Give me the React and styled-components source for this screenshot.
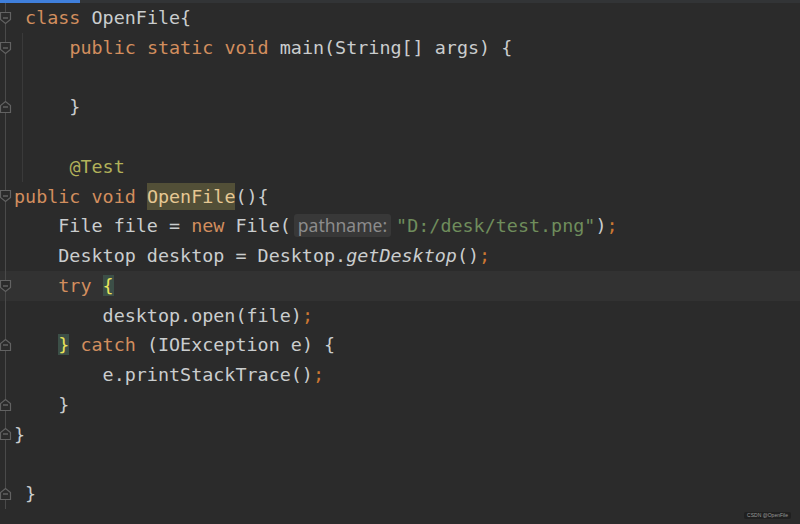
import React from "react";
import styled, { createGlobalStyle } from "styled-components";

const GlobalStyle = createGlobalStyle`
  html, body {
    margin: 0;
    padding: 0;
    background: #2b2b2b;
  }
`;

const Editor = styled.div`
  position: relative;
  width: 800px;
  height: 524px;
  overflow: hidden;
  background: #2b2b2b;
  font-family: "DejaVu Sans Mono", "Liberation Mono", monospace;
  font-size: 18.4px;
  color: #cacdce;
`;

const TopStrip = styled.div`
  height: 3px;
  background: #323436;
  display: flex;
`;

const ActiveTab = styled.div`
  width: 80px;
  background: #3f7fdc;
`;

const Lines = styled.div`
  display: flex;
  flex-direction: column;
`;

const Row = styled.div`
  display: flex;
  height: 29.75px;
  background: ${(p) => (p.$current ? "#323232" : "transparent")};
`;

const Gutter = styled.div`
  width: 14px;
  height: 100%;
  flex-shrink: 0;
  display: flex;
  align-items: center;
  background: linear-gradient(
    to right,
    transparent 5px,
    #4a4a4a 5px,
    #4a4a4a 6px,
    transparent 6px
  );
`;

const Code = styled.div`
  position: relative;
  flex: 1;
  line-height: 29.75px;
  white-space: pre;

  &::before {
    content: "";
    display: ${(p) => (p.$guide ? "block" : "none")};
    position: absolute;
    left: 8px;
    top: 0;
    bottom: 0;
    width: 1px;
    background: #3a3a3a;
  }
`;

const Kw = styled.span`
  color: #d28e5e;
`;

const Semi = styled.span`
  color: #cc7832;
`;

const Str = styled.span`
  color: #6f8d5c;
`;

const Ann = styled.span`
  color: #b2b15a;
`;

const Ital = styled.span`
  font-style: italic;
`;

const Decl = styled.span`
  color: #e6c893;
  background: #524f37;
  padding: 3px 0;
`;

const Match = styled.span`
  color: #e9e45a;
  background: #3c4f47;
`;

const Hint = styled.span`
  display: inline-block;
  vertical-align: middle;
  font-family: "Noto Sans", "DejaVu Sans", sans-serif;
  font-size: 17.5px;
  line-height: 23px;
  color: #8c8c8c;
  background: #383838;
  border-radius: 3px;
  padding: 0 4px;
  margin: -3px 5px 0 3px;
`;

const Watermark = styled.div`
  position: absolute;
  right: 9px;
  bottom: 5px;
  padding: 0 3px;
  font-family: "Liberation Sans", sans-serif;
  font-size: 5px;
  line-height: 7px;
  color: #9a9a9a;
  background: #202020;
  border-radius: 2px;
`;

const FoldMark = ({ end }) => (
  <svg width="13" height="14" viewBox="0 0 13 14" style={{ marginLeft: -1 }}>
    {end ? (
      <path
        d="M1.5 12.5 V5.5 L6.5 1.5 L11.5 5.5 V12.5 Z"
        fill="#2b2b2b"
        stroke="#626262"
        strokeWidth="1.2"
      />
    ) : (
      <path
        d="M1.5 1.5 H11.5 V8.5 L6.5 12.5 L1.5 8.5 Z"
        fill="#2b2b2b"
        stroke="#626262"
        strokeWidth="1.2"
      />
    )}
    <path d="M4 7 H9" stroke="#6e6e6e" strokeWidth="1.2" />
  </svg>
);

const lines = [
  { fold: "start", code: <>{" "}<Kw>class</Kw>{" OpenFile{"}</> },
  {
    fold: "start",
    guide: true,
    code: (
      <>
        {"     "}
        <Kw>public static void</Kw>
        {" main(String[] args) {"}
      </>
    ),
  },
  { guide: true, code: "" },
  { fold: "end", guide: true, code: "     }" },
  { guide: true, code: "" },
  { guide: true, code: <>{"     "}<Ann>@Test</Ann></> },
  {
    fold: "start",
    code: (
      <>
        <Kw>public void</Kw>
        {" "}
        <Decl>OpenFile</Decl>
        {"(){"}
      </>
    ),
  },
  {
    code: (
      <>
        {"    File file = "}
        <Kw>new</Kw>
        {" File("}
        <Hint>pathname:</Hint>
        <Str>"D:/desk/test.png"</Str>)<Semi>;</Semi>
      </>
    ),
  },
  {
    code: (
      <>
        {"    Desktop desktop = Desktop."}
        <Ital>getDesktop</Ital>()<Semi>;</Semi>
      </>
    ),
  },
  {
    fold: "start",
    current: true,
    code: (
      <>
        {"    "}
        <Kw>try</Kw>
        {" "}
        <Match>{"{"}</Match>
      </>
    ),
  },
  { code: <>{"        desktop.open(file)"}<Semi>;</Semi></> },
  {
    fold: "end",
    code: (
      <>
        {"    "}
        <Match>{"}"}</Match>
        {" "}
        <Kw>catch</Kw>
        {" (IOException e) {"}
      </>
    ),
  },
  { code: <>{"        e.printStackTrace()"}<Semi>;</Semi></> },
  { fold: "end", code: "    }" },
  { fold: "end", code: "}" },
  { code: "" },
  { fold: "end", code: " }" },
];

export default function App() {
  return (
    <>
      <GlobalStyle />
      <Editor>
        <TopStrip>
          <ActiveTab />
        </TopStrip>
        <Lines>
          {lines.map((l, i) => (
            <Row key={i} $current={l.current}>
              <Gutter>{l.fold && <FoldMark end={l.fold === "end"} />}</Gutter>
              <Code $guide={l.guide}>{l.code}</Code>
            </Row>
          ))}
        </Lines>
        <Watermark>CSDN @OpenFile</Watermark>
      </Editor>
    </>
  );
}
